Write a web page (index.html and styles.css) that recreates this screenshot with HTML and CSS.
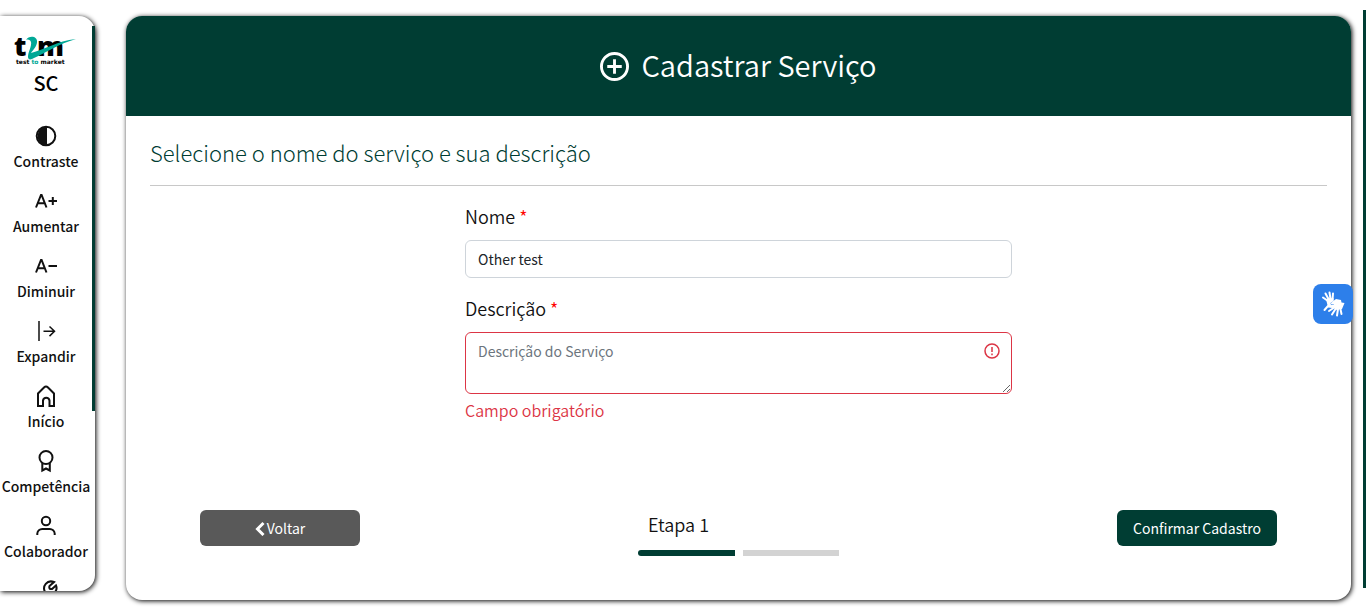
FILE: index.html
```html
<!DOCTYPE html>
<html lang="pt-BR">
<head>
<meta charset="utf-8">
<meta name="viewport" content="width=device-width, initial-scale=1">
<title>Cadastrar Serviço</title>
<link rel="stylesheet" href="styles.css">
</head>
<body>
<div class="layout">
  <aside class="sidebar">
    <div class="sidebar-scroll">
      <svg class="logo" viewBox="0 0 64 32" role="img" aria-label="t2m test to market">
        <text class="logo-letter" x="0" y="20">t</text>
        <text class="logo-letter" x="23" y="20">m</text>
        <path fill="#00a896" d="M12 4C15 -1 24 0 23 6.500C22.500 11 19 14 17 17C30 14 43 5 62 3C45 8 35 15 20 22C17 24 14 24 14 21C14 16 18 10 17 6C16.500 4 14 3 12 4Z"/>
        <text class="logo-tag" x="2" y="28">test <tspan fill="#00a896">to</tspan> market</text>
      </svg>
      <span class="initials">SC</span>
      <nav class="menu">
        <button class="item" type="button">
          <svg class="icon" viewBox="0 0 24 24"><circle cx="12" cy="12" r="9.300"/><path class="fill" d="M13 2.500A9.500 9.500 0 1 0 13 21.500Z"/></svg>
          <span>Contraste</span>
        </button>
        <button class="item" type="button">
          <svg class="icon" viewBox="0 0 24 24"><path d="M2 18.500 7 6h.6L12.500 18.500M3.500 14.300h7.500M14.500 12h8.500M18.800 8v8"/></svg>
          <span>Aumentar</span>
        </button>
        <button class="item" type="button">
          <svg class="icon" viewBox="0 0 24 24"><path d="M2 18.500 7 6h.6L12.500 18.500M3.500 14.300h7.500M14.500 12h8.500"/></svg>
          <span>Diminuir</span>
        </button>
        <button class="item" type="button">
          <svg class="icon thin" viewBox="0 0 24 24"><path d="M5 2v20M9.500 12.300H20M15.500 7.500l5 4.800-5 4.800"/></svg>
          <span>Expandir</span>
        </button>
        <a class="item" href="#">
          <svg class="icon" viewBox="0 0 24 24"><path d="M4 22V9.500L10 3.500Q12 1.500 14 3.500L20 9.500V22H15.500V16.500A3.300 3.300 0 0 0 9 16.500V22Z"/></svg>
          <span>Início</span>
        </a>
        <a class="item" href="#">
          <svg class="icon" viewBox="0 0 24 24"><circle cx="12" cy="8.500" r="6.500"/><path d="M8.300 14v7.500L12 19.500l3.800 2V14"/></svg>
          <span>Competência</span>
        </a>
        <a class="item" href="#">
          <svg class="icon" viewBox="0 0 24 24"><circle cx="12" cy="7" r="4.200"/><path d="M3.300 21v-1.500A5 5 0 0 1 8.300 15h7.400a5 5 0 0 1 5 4.500V21"/></svg>
          <span>Colaborador</span>
        </a>
        <a class="item" href="#" aria-label="Serviço">
          <svg class="icon" viewBox="0 0 24 24"><path d="M11 13C8 7 13 .5 20 3L15.500 7Q14.500 10.500 18 10L22 6.500C24 11 20 16 16 15L10 21M11 12 5 18"/></svg>
        </a>
      </nav>
    </div>
    <div class="sidebar-thumb"></div>
  </aside>

  <main class="card">
    <header class="card-header">
      <svg class="title-icon" viewBox="0 0 30 30"><circle cx="15" cy="15" r="13.500"/><path d="M15 7.500v15M7.500 15h15"/></svg>
      <h1 class="title">Cadastrar Serviço</h1>
    </header>
    <form class="card-body" novalidate>
      <h2 class="subtitle">Selecione o nome do serviço e sua descrição</h2>
      <div class="fields">
        <div class="field">
          <label class="label" for="nome">Nome <span class="required">*</span></label>
          <input class="control" id="nome" type="text" value="Other test">
        </div>
        <div class="field">
          <label class="label" for="descricao">Descrição <span class="required">*</span></label>
          <div class="control-wrap">
            <textarea class="control area invalid" id="descricao" rows="2" placeholder="Descrição do Serviço" aria-describedby="descricao-erro"></textarea>
            <svg class="alert-icon" viewBox="0 0 16 16"><circle cx="8" cy="8" r="7"/><path d="M8 4v5M8 10.500v1.700"/></svg>
          </div>
          <p class="error" id="descricao-erro">Campo obrigatório</p>
        </div>
      </div>
      <div class="actions">
        <button class="btn back" type="button"><svg class="chevron" viewBox="0 0 10 16"><path d="M8.500 3 2.500 9 8.500 15"/></svg>Voltar</button>
        <div class="stepper">
          <span class="step-name">Etapa 1</span>
          <div class="steps"><div class="step done"></div><div class="step"></div></div>
        </div>
        <button class="btn confirm" type="button">Confirmar Cadastro</button>
      </div>
    </form>
  </main>
  <div class="page-thumb"></div>
</div>
<button class="libras" type="button" aria-label="Libras">
  <svg class="hands" viewBox="0 0 24 26">
    <path d="M7 10 2 6.500M8 9 4.500 2.500M9.500 8 8.500 1.500M11.500 9 12 2.500M7 15 3.500 19"/>
    <path class="palm" d="M5 8 12.500 7 12.500 10 9.500 12 10 14 13 15 12 17 7 16.500Z"/>
    <path d="M14 16 8 20M14.500 18 11 23.500M17 18 16 24.500M19 16 20.500 23M15 14 10 15.500M15 10.500 11 12.500"/>
    <path class="palm" d="M11 11 15 8 20 9 20.500 11.500 23.500 12 21 18 14 19 13 14Z"/>
  </svg>
</button>
</body>
</html>
```
FILE: styles.css
```css
* { box-sizing: border-box; }
body {
  margin: 0;
  background: #fff;
  color: #111;
  font-family: "Noto Sans CJK JP", "Noto Sans", sans-serif;
}
button, input, textarea { font-family: inherit; }
svg { fill: none; stroke: currentColor; flex-shrink: 0; }
.layout { display: flex; align-items: flex-start; min-height: 100vh; }

.sidebar {
  position: relative;
  width: 95px;
  height: calc(100vh - 32px);
  margin: 16px 31px 0 0;
  border-radius: 0 16px 16px 0;
  box-shadow: 1px 1px 5px #000;
  flex-shrink: 0;
}
.sidebar-scroll {
  display: flex;
  flex-direction: column;
  align-items: center;
  height: 100%;
  padding: 20px 3px 0 0;
  overflow: hidden;
  border-radius: inherit;
}
.sidebar-thumb {
  position: absolute;
  top: 10px;
  right: 0;
  width: 3px;
  height: 385px;
  background: #003d33;
}
.logo { width: 64px; height: 32px; stroke: none; overflow: visible; }
.logo-letter { font: 800 27px "Open Sans", sans-serif; fill: #000; }
.logo-tag { font: bold 6px "DejaVu Sans", sans-serif; fill: #000; }
.initials { font-size: 20px; line-height: 30px; font-weight: 500; color: #000; }
.menu { display: flex; flex-direction: column; align-items: center; gap: 18px; padding-top: 26px; }
.item {
  display: flex;
  flex-direction: column;
  align-items: center;
  gap: 3px;
  padding: 0;
  border: 0;
  background: none;
  color: #111;
  font-size: 14px;
  line-height: 20px;
  font-weight: 500;
  text-decoration: none;
}
.icon { width: 24px; height: 24px; stroke-width: 2; }
.icon.thin { stroke-width: 1.500; }
.icon .fill { fill: currentColor; stroke: none; }

.card {
  flex: 1;
  min-width: 0;
  margin: 16px 12px 7px 0;
  border-radius: 16px;
  overflow: hidden;
  box-shadow: 1px 1px 5px #000;
}
.card-header {
  display: flex;
  align-items: center;
  justify-content: center;
  gap: 12px;
  height: 100px;
  background: #003d33;
  color: #fff;
}
.title-icon { width: 29px; height: 29px; stroke-width: 3; }
.title { margin: 0; padding-bottom: 4px; font-size: 29px; line-height: 42px; font-weight: 350; }
.card-body { padding: 18px 24px 44px; }
.subtitle {
  margin: 0;
  padding-bottom: 15px;
  border-bottom: 1px solid #c8c8c8;
  color: #003d33;
  font-size: 22px;
  line-height: 36px;
  font-weight: 300;
}
.fields { display: flex; flex-direction: column; gap: 16px; max-width: 547px; margin: 16px auto 0; }
.field { display: flex; flex-direction: column; }
.label { margin-bottom: 10px; font-size: 18px; line-height: 28px; font-weight: 350; }
.required { color: red; }
.control {
  display: block;
  width: 100%;
  height: 38px;
  padding: 6px 12px;
  border: 1px solid #ced4da;
  border-radius: 6px;
  background: #fff;
  color: #212529;
  font-size: 14px;
  line-height: 24px;
}
.control::placeholder { color: #6c757d; opacity: 1; }
.control-wrap { position: relative; }
.area { height: 62px; padding-right: 36px; resize: vertical; overflow: hidden; }
.invalid { border-color: #dc3545; }
.alert-icon { position: absolute; top: 11px; right: 12px; width: 16px; height: 16px; color: #dc3545; stroke-width: 1.500; }
.error { margin: 4px 0 0; color: #dc3545; font-size: 16px; line-height: 24px; font-weight: 350; }
.actions { display: flex; justify-content: space-between; align-items: flex-start; padding: 88px 50px 0; }
.btn {
  display: flex;
  align-items: center;
  justify-content: center;
  gap: 2px;
  width: 160px;
  height: 36px;
  padding: 0;
  border: 0;
  border-radius: 6px;
  color: #fff;
  font-size: 14px;
}
.back { background: #595959; }
.confirm { background: #003d33; }
.chevron { width: 10px; height: 16px; stroke-width: 3; }
.stepper { width: 201px; }
.step-name { display: block; padding-left: 10px; font-size: 18px; line-height: 28px; font-weight: 350; }
.steps { display: flex; gap: 8px; margin-top: 12px; }
.step { flex: 1; height: 6px; background: #d3d3d3; }
.done { background: #003d33; border-radius: 3px 0 0 3px; }

.page-thumb { width: 3px; height: calc(100vh - 29px); margin-top: 10px; background: #003d33; }
.libras {
  position: fixed;
  top: 284px;
  right: 13px;
  display: flex;
  align-items: center;
  justify-content: center;
  width: 40px;
  height: 40px;
  padding: 0;
  border: 0;
  border-radius: 8px;
  background: #2d7fea;
  color: #fff;
}
.hands { width: 24px; height: 26px; stroke-width: 2; stroke-linecap: round; }
.palm { fill: currentColor; stroke: none; }
```
